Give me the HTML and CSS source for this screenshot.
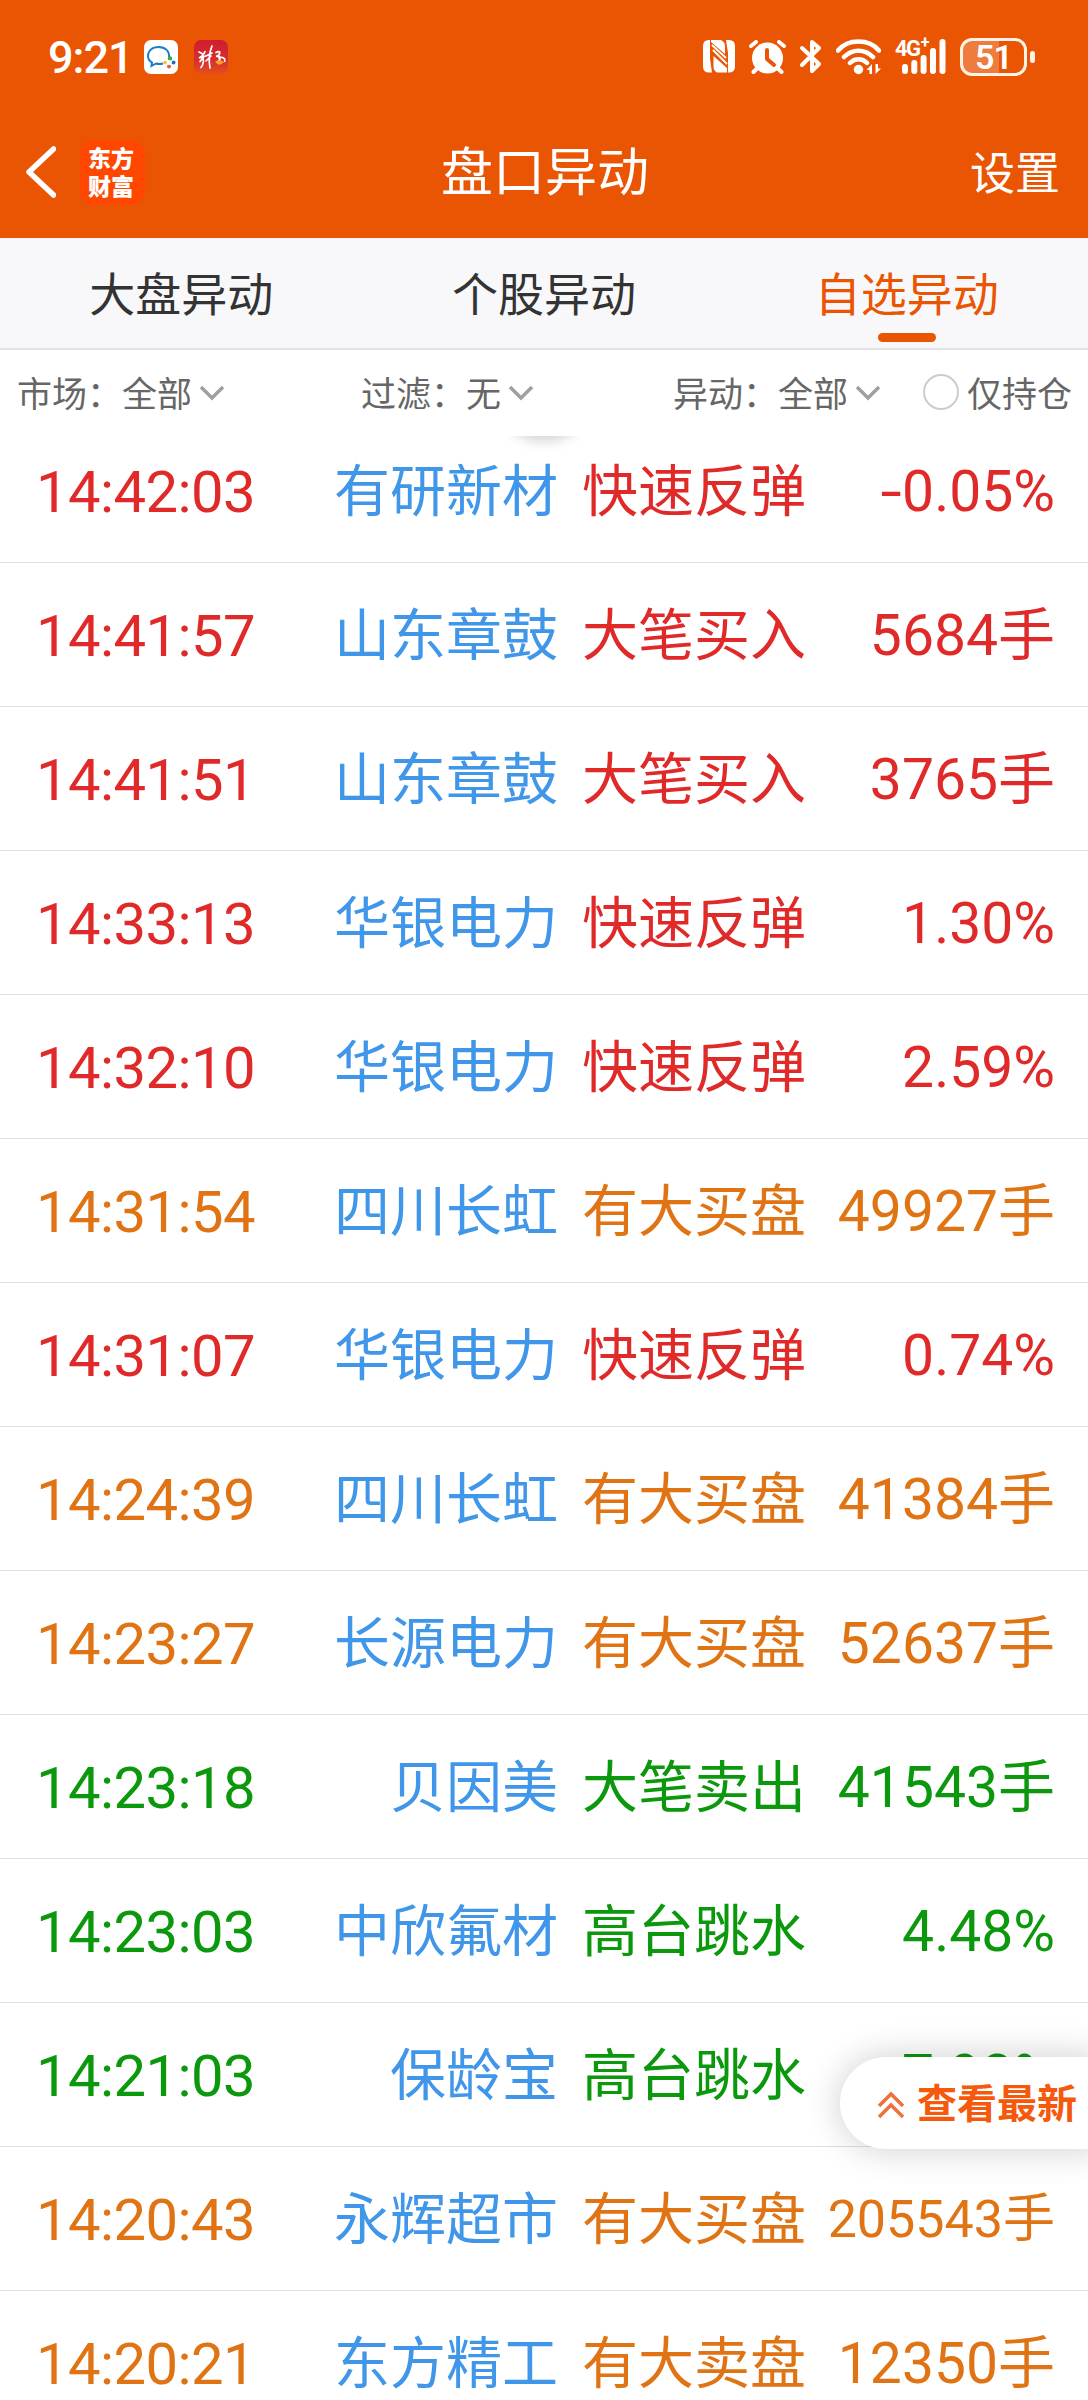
FILE: index.html
```html
<!DOCTYPE html>
<html lang="zh-CN">
<head>
<meta charset="utf-8">
<title>盘口异动</title>
<link rel="stylesheet" href="styles.css">
</head>
<body>
<header class="header">
  <div class="status">
    <span class="clock">9:21</span>
    <svg class="app-icon" viewBox="0 0 34 34">
      <rect width="34" height="34" rx="7" fill="#fff"/>
      <path d="M25 18C26 11 21 7 14.500 7S4 11 4 16c0 3 1.500 5 4 6.500L7.500 26l4.500-2.500c2 .6 5 .6 7 0" fill="none" stroke="#1e7cc8" stroke-width="2"/>
      <circle cx="26" cy="18.500" r="2.200" fill="#35a84a"/><circle cx="29.500" cy="22.500" r="2" fill="#2170bd"/>
      <circle cx="21" cy="22.500" r="1.800" fill="#f3c02c"/><circle cx="25" cy="26.500" r="2" fill="#e0623a"/>
      <circle cx="25.200" cy="22.500" r="2.300" fill="#fff"/>
    </svg>
    <svg class="app-icon app-icon-red" viewBox="0 0 34 34">
      <defs><linearGradient id="red" x1="0" y1="0" x2="0" y2="1"><stop offset="0" stop-color="#cf1d2e"/><stop offset=".6" stop-color="#d82e30"/><stop offset="1" stop-color="#e4501c"/></linearGradient></defs>
      <rect width="34" height="34" rx="7" fill="url(#red)"/>
      <path d="M5 12l3 1.500M11 11.500c-1 3-3 5-6 6.500l5-1.500-4 5M8.500 17c1.500 3 1 7-1.500 10.500M12 16l6-3M18 6c-3 7-3.500 14-2 22M17 16l-5 5M22 12.500c5-3 5 2 0 4 5-1.500 5 3 2 5" fill="none" stroke="#fff" stroke-width="1.700" stroke-linecap="round"/>
      <path d="M24 18c4-2 8 0 6.500 4" fill="none" stroke="#fff" stroke-width="1.500"/>
      <path d="M21 21.500q4 6 9 .5l-4-2z" fill="#f5a623"/>
    </svg>
    <span class="spacer"></span>
    <svg class="ic-nfc" viewBox="0 0 32 33">
      <path d="M6 0h1v19l2 13.500H6q-6 0-6-6V6Q0 0 6 0z" fill="#fff"/>
      <path d="M23 0h3q6 0 6 6v20.500q0 6-6 6h-1V13z" fill="#fff"/>
      <path d="M8 0h10q4 2 4 6v8L8 2zM10.500 16L24 28v4.500H14q-3.500-2-3.500-6z" fill="#fff"/>
      <path d="M9 5l14 13M10 10l14 14" stroke="#fff" stroke-width="1.800"/>
    </svg>
    <svg class="ic-alarm" viewBox="0 0 37 34">
      <circle cx="18.500" cy="18" r="15.500" fill="#fff"/>
      <path d="M2 6l5-4M35 6l-5-4M4.500 32l4-4M32.500 32l-4-4" stroke="#fff" stroke-width="4" stroke-linecap="round"/>
      <path d="M18 10v9l7 6" fill="none" stroke="#ea5504" stroke-width="4" stroke-linecap="round" stroke-linejoin="round"/>
    </svg>
    <svg class="ic-bt" viewBox="0 0 22 35">
      <path d="M2 9l17 16-7 7V3l7 6L2 26" fill="none" stroke="#fff" stroke-width="4" stroke-linecap="round" stroke-linejoin="round"/>
    </svg>
    <svg class="ic-wifi" viewBox="0 0 45 36">
      <path d="M2 11.500C12-.5 33-.5 43 11.500M8 18c8-8.500 21-8.500 29 0M14 24c5-5 12-5 17 0" fill="none" stroke="#fff" stroke-width="4.500" stroke-linecap="round"/>
      <circle cx="22.500" cy="30.500" r="4.700" fill="#fff"/>
      <path d="M30.500 31l5.500-6v10h-2.500v-4zM45 29.500L39.500 35V25H42v4.500z" fill="#fff"/>
    </svg>
    <div class="signal">
      <span class="net">4G<sup class="plus">+</sup></span>
      <svg class="ic-bars" viewBox="0 0 44 35">
        <path d="M3 28v4M12.300 24v8M21.600 19v13M31 12v20M40.500 3v29" stroke="#fff" stroke-width="6" stroke-linecap="round"/>
      </svg>
    </div>
    <div class="battery"><span class="level">51</span></div>
    <span class="nub"></span>
  </div>
  <nav class="nav">
    <svg class="back" viewBox="0 0 30 52"><path d="M27.500 3L3 26l24.500 23" fill="none" stroke="#fff" stroke-width="5.500" stroke-linejoin="round" stroke-linecap="round"/></svg>
    <div class="logo">东方财富</div>
    <h1 class="title">盘口异动</h1>
    <a class="settings">设置</a>
  </nav>
</header>
<div class="tabs">
  <a class="tab">大盘异动</a><a class="tab">个股异动</a><a class="tab active">自选异动</a>
</div>
<div class="filters">
  <div class="filter market">市场：全部<svg class="chev" viewBox="0 0 26 16"><path d="M2 2l11 11L24 2"/></svg></div>
  <div class="filter screen">过滤：无<svg class="chev" viewBox="0 0 26 16"><path d="M2 2l11 11L24 2"/></svg></div>
  <div class="filter kind">异动：全部<svg class="chev" viewBox="0 0 26 16"><path d="M2 2l11 11L24 2"/></svg></div>
  <div class="filter hold"><span class="radio"></span>仅持仓</div>
</div>
<main class="list">
  <div class="row red"><span class="time">14:42:03</span><span class="name">有研新材</span><span class="act">快速反弹</span><span class="val"><span class="minus">-</span>0.05%</span></div>
  <div class="row red"><span class="time">14:41:57</span><span class="name">山东章鼓</span><span class="act">大笔买入</span><span class="val">5684手</span></div>
  <div class="row red"><span class="time">14:41:51</span><span class="name">山东章鼓</span><span class="act">大笔买入</span><span class="val">3765手</span></div>
  <div class="row red"><span class="time">14:33:13</span><span class="name">华银电力</span><span class="act">快速反弹</span><span class="val">1.30%</span></div>
  <div class="row red"><span class="time">14:32:10</span><span class="name">华银电力</span><span class="act">快速反弹</span><span class="val">2.59%</span></div>
  <div class="row orange"><span class="time">14:31:54</span><span class="name">四川长虹</span><span class="act">有大买盘</span><span class="val">49927手</span></div>
  <div class="row red"><span class="time">14:31:07</span><span class="name">华银电力</span><span class="act">快速反弹</span><span class="val">0.74%</span></div>
  <div class="row orange"><span class="time">14:24:39</span><span class="name">四川长虹</span><span class="act">有大买盘</span><span class="val">41384手</span></div>
  <div class="row orange"><span class="time">14:23:27</span><span class="name">长源电力</span><span class="act">有大买盘</span><span class="val">52637手</span></div>
  <div class="row green"><span class="time">14:23:18</span><span class="name">贝因美</span><span class="act">大笔卖出</span><span class="val">41543手</span></div>
  <div class="row green"><span class="time">14:23:03</span><span class="name">中欣氟材</span><span class="act">高台跳水</span><span class="val">4.48%</span></div>
  <div class="row green"><span class="time">14:21:03</span><span class="name">保龄宝</span><span class="act">高台跳水</span><span class="val">7.98%</span></div>
  <div class="row orange"><span class="time">14:20:43</span><span class="name">永辉超市</span><span class="act">有大买盘</span><span class="val small">205543手</span></div>
  <div class="row orange"><span class="time">14:20:21</span><span class="name">东方精工</span><span class="act">有大卖盘</span><span class="val">12350手</span></div>
</main>
<a class="latest">
  <svg class="up" viewBox="0 0 28 30"><path d="M2 16L14 4l12 12M2 27l12-12 12 12"/></svg>查看最新
</a>
</body>
</html>
```
FILE: styles.css
```css
* { box-sizing: border-box; }
body {
  position: relative;
  width: 1088px;
  height: 2400px;
  margin: 0;
  overflow: hidden;
  background: #fff;
  font-family: Roboto, "Noto Sans CJK SC", sans-serif;
}
svg { display: block; flex: none; }

.header { height: 238px; background: #ea5504; color: #fff; }
.status { display: flex; align-items: center; height: 112px; padding: 1px 53px 0 48px; }
.clock { width: 96px; padding-top: 2px; font-size: 45px; font-weight: 500; line-height: 56px; letter-spacing: -1px; white-space: nowrap; }
.app-icon { width: 34px; height: 34px; }
.app-icon-red { margin-left: 16px; }
.spacer { flex: 1; }
.ic-nfc { width: 32px; height: 33px; margin-right: 14px; }
.ic-alarm { width: 37px; height: 34px; margin-right: 14px; }
.ic-bt { width: 22px; height: 35px; margin-right: 14px; }
.ic-wifi { width: 45px; height: 36px; margin-right: 14px; }
.signal { display: grid; width: 51px; height: 35px; margin-right: 14px; }
.net, .ic-bars { grid-area: 1 / 1; }
.net { display: flex; font-size: 22px; font-weight: 700; line-height: 19px; letter-spacing: -1.5px; }
.plus { margin-left: 1px; font-size: 16px; line-height: 8px; }
.ic-bars { width: 44px; height: 35px; justify-self: end; }
.battery {
  display: flex; align-items: center; justify-content: center;
  width: 67px; height: 38px;
  border: 3px solid #fff3e6; border-radius: 12px;
  background: linear-gradient(90deg, #ef7c3f 59%, transparent 59%);
}
.level { padding-top: 1px; font-size: 34px; font-weight: 600; line-height: 32px; letter-spacing: -1px; }
.nub { width: 5px; height: 12px; margin-left: 3px; border-radius: 3px; background: #fff3e6; }

.nav { display: grid; grid-template-columns: 54px 1fr auto 1fr; align-items: center; height: 120px; padding: 0 28px 0 26px; }
.back { width: 30px; height: 52px; }
.logo {
  width: 65px; height: 65px; padding: 3px 9px 0 8px; border-radius: 14px; background: #ff4700;
  font: 900 23px/28px "Noto Sans CJK SC", sans-serif;
  word-break: break-all;
}
.title { margin: 3px 0 0 -50px; font-size: 52px; font-weight: 400; line-height: 60px; }
.settings { justify-self: end; margin-top: 5px; font-size: 45px; line-height: 60px; }

.tabs { display: grid; grid-template-columns: repeat(3, 1fr); height: 112px; border-bottom: 2px solid #e4e4e6; background: #f8f8fa; }
.tab { display: flex; flex-direction: column; align-items: center; padding-top: 27px; color: #333; font-size: 46px; line-height: 60px; }
.active { color: #ea5504; }
.active::after { content: ""; width: 58px; height: 9px; margin-top: 8px; border-radius: 5px; background: #ea5504; }

.filters { display: grid; grid-template-columns: 344px 312px 250px 1fr; height: 86px; padding-left: 17px; background: #fff; }
.filter { display: flex; align-items: center; height: 82px; color: #666; font-size: 35px; white-space: nowrap; }
.chev { width: 26px; height: 16px; margin: 3px 0 0 7px; fill: none; stroke: #a0a0a0; stroke-width: 3.5; }
.radio { width: 36px; height: 36px; margin: 2px 8px 0 0; border: 2px solid #ccc; border-radius: 50%; }

.list { position: relative; height: 1964px; overflow: hidden; }
.list::before {
  content: ""; position: absolute; top: -30px; left: 514px; width: 60px; height: 30px;
  border-radius: 50%; box-shadow: 0 2px 14px 2px rgba(0, 0, 0, .2);
}
.row {
  display: grid; grid-template-columns: 290px 232px 246px 1fr; align-items: center;
  height: 144px; padding: 2px 33px 0 36px; border-bottom: 1px solid #e0e0e0;
  font-size: 56px; line-height: 80px; white-space: nowrap;
}
.row:first-child { height: 127px; padding-bottom: 1px; }
.row:first-child > * { margin-top: -16px; }
.time { font-size: 58px; letter-spacing: -.6px; }
.name { justify-self: end; color: #4096e8; }
.act { margin-left: 24px; }
.val { justify-self: end; font-size: 57px; }
.small { font-size: 52px; }
.minus { display: inline-block; transform: scaleX(1.35); transform-origin: right; }
.red { color: #e02a2a; }
.orange { color: #e07414; }
.green { color: #0c980c; }

.latest {
  position: absolute; top: 2057px; left: 840px; width: 260px; height: 92px;
  display: flex; align-items: center; padding: 4px 0 0 37px;
  border-radius: 46px 0 0 46px; background: #fff; color: #f5590c;
  font-size: 40px; font-weight: 700; line-height: 60px; white-space: nowrap;
  box-shadow: 0 0 36px rgba(0, 0, 0, .2);
}
.up { width: 28px; height: 30px; margin-right: 12px; fill: none; stroke: #f0703a; stroke-width: 3.5; }
```
